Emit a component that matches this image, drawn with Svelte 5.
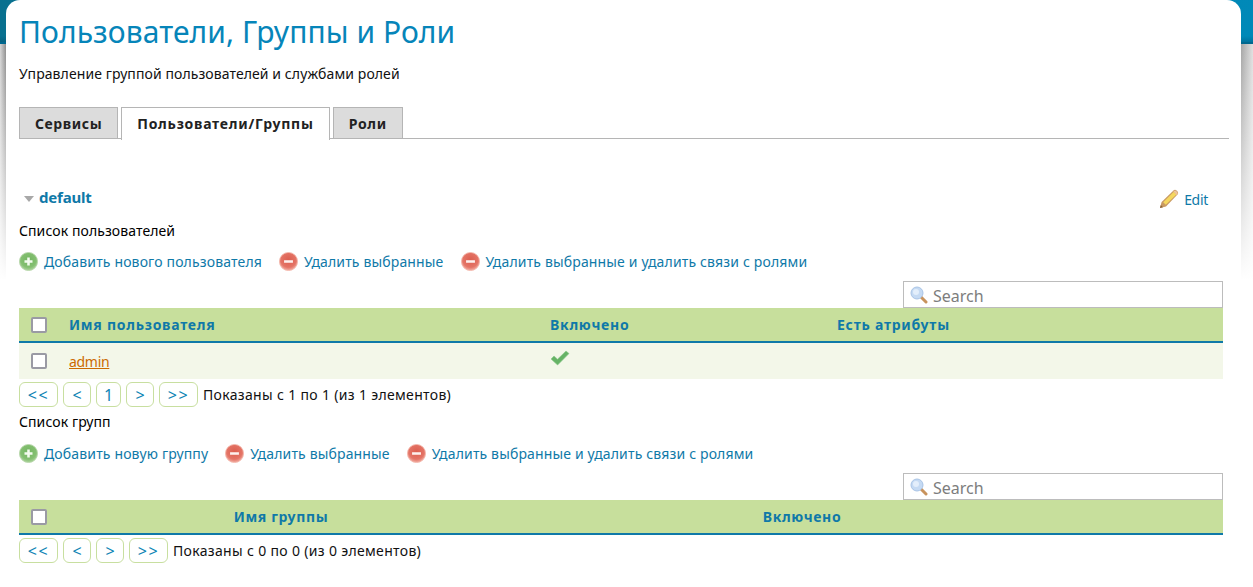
<script>
	const userPager = ['<<', '<', '1', '>', '>>'];
	const groupPager = ['<<', '<', '>', '>>'];
</script>

{#snippet addIcon()}
	<svg class="icon" viewBox="0 0 18 18" aria-hidden="true">
		<circle cx="9" cy="9" r="8.6" fill="url(#add-fill)" stroke="#b5d6a8" stroke-width=".8" />
		<path d="M9 5.2v7.6M5.2 9h7.6" stroke="#f4fbef" stroke-width="2.4" />
	</svg>
{/snippet}

{#snippet removeIcon()}
	<svg class="icon" viewBox="0 0 18 18" aria-hidden="true">
		<circle cx="9" cy="9" r="8.6" fill="url(#remove-fill)" stroke="#f3b5aa" stroke-width=".8" />
		<path d="M4.8 9h8.4" stroke="#fdf1ee" stroke-width="2.4" />
	</svg>
{/snippet}

{#snippet searchBox()}
	<div class="search-row">
		<label class="search">
			<svg viewBox="0 0 18 18" width="18" height="18" aria-hidden="true">
				<path d="M11 11l5 5" stroke="#c8935c" stroke-width="3" stroke-linecap="round" />
				<circle cx="7" cy="7" r="6" fill="#c5daf3" stroke="#a9c4e6" />
				<circle cx="6" cy="6" r="3" fill="#e3eefb" />
			</svg>
			<input type="text" placeholder="Search" />
		</label>
	</div>
{/snippet}

{#snippet pager(items, summary)}
	<div class="pager">
		{#each items as item}
			<button type="button" class:wide={item.length > 1} class:num={item === '1'}>{item}</button>
		{/each}
		<span>{summary}</span>
	</div>
{/snippet}

<svg class="defs" width="0" height="0" aria-hidden="true">
	<defs>
		<radialGradient id="add-fill" cx="50%" cy="40%" r="60%">
			<stop offset="0" stop-color="#74b662" />
			<stop offset=".7" stop-color="#84bf71" />
			<stop offset="1" stop-color="#aed49e" />
		</radialGradient>
		<radialGradient id="remove-fill" cx="50%" cy="40%" r="60%">
			<stop offset="0" stop-color="#dc5f50" />
			<stop offset=".7" stop-color="#e47466" />
			<stop offset="1" stop-color="#f2b0a5" />
		</radialGradient>
	</defs>
</svg>

<div class="page">
	<main class="panel">
		<h1>Пользователи, Группы и Роли</h1>
		<p class="desc">Управление группой пользователей и службами ролей</p>

		<nav class="tabs">
			<a href="#services">Сервисы</a>
			<a href="#users" class="active">Пользователи/Группы</a>
			<a href="#roles">Роли</a>
		</nav>

		<div class="service-head">
			<h2><span class="arrow"></span>default</h2>
			<a href="#edit" class="edit">
				<svg viewBox="0 0 20 20" width="20" height="20" aria-hidden="true">
					<path d="M1 19l1.6-6L14.5 1.5a2.2 2.2 0 0 1 3 0l1 1a2.2 2.2 0 0 1 0 3L7 17.4z" fill="#c99a63" />
					<path d="M4.2 13.2L14.8 2.8l2.6 2.6L6.8 15.8z" fill="#f5d75e" />
					<path d="M14.8 2.2a1.8 1.8 0 0 1 2.6 0l.7.7a1.8 1.8 0 0 1 0 2.6l-.5.4-3.2-3.3z" fill="#f0c49a" />
					<path d="M1 19l.8-3 2.2 2.2z" fill="#8a6238" />
				</svg>
				<span>Edit</span>
			</a>
		</div>

		<h3>Список пользователей</h3>
		<div class="actions">
			<a href="#add-user">{@render addIcon()}Добавить нового пользователя</a>
			<a href="#del-user">{@render removeIcon()}Удалить выбранные</a>
			<a href="#del-user-roles">{@render removeIcon()}Удалить выбранные и удалить связи с ролями</a>
		</div>
		{@render searchBox()}
		<table>
			<colgroup><col style="width: 40px" /><col style="width: 481px" /><col style="width: 287px" /><col /></colgroup>
			<thead>
				<tr>
					<th><input type="checkbox" /></th>
					<th>Имя пользователя</th>
					<th>Включено</th>
					<th>Есть атрибуты</th>
				</tr>
			</thead>
			<tbody>
				<tr>
					<td><input type="checkbox" /></td>
					<td><a href="#admin" class="user">admin</a></td>
					<td>
						<svg class="check" viewBox="0 0 20 16" width="20" height="16" aria-hidden="true">
							<path d="M1 9l3-3 3.5 3.2L16 1l3 2.6L7.6 15z" fill="#66b366" stroke="#8cc98c" stroke-width=".6" />
						</svg>
					</td>
					<td></td>
				</tr>
			</tbody>
		</table>
		{@render pager(userPager, 'Показаны с 1 по 1 (из 1 элементов)')}

		<h3 class="second">Список групп</h3>
		<div class="actions lower">
			<a href="#add-group">{@render addIcon()}Добавить новую группу</a>
			<a href="#del-group">{@render removeIcon()}Удалить выбранные</a>
			<a href="#del-group-roles">{@render removeIcon()}Удалить выбранные и удалить связи с ролями</a>
		</div>
		{@render searchBox()}
		<table class="groups">
			<colgroup><col style="width: 40px" /><col style="width: 444px" /><col style="width: 598px" /><col /></colgroup>
			<thead>
				<tr>
					<th><input type="checkbox" /></th>
					<th>Имя группы</th>
					<th>Включено</th>
					<th></th>
				</tr>
			</thead>
		</table>
		{@render pager(groupPager, 'Показаны с 0 по 0 (из 0 элементов)')}
	</main>
</div>

<style>
	:global(body) {
		margin: 0;
		background: #fff;
		font-family: "Noto Sans", Verdana, sans-serif;
		font-size: 14px;
		letter-spacing: 0.09px;
		color: #111;
	}

	.defs {
		display: block;
	}

	.page {
		height: 587px;
		overflow: hidden;
		padding: 0 12px 0 6px;
		box-sizing: border-box;
		background:
			linear-gradient(rgba(0, 60, 90, 0) 36px, rgba(0, 50, 80, 0.25) 42px) 0 0 / 100% 42px no-repeat,
			linear-gradient(90deg, #08708f, #0089b8) 0 0 / 100% 42px no-repeat,
			linear-gradient(#00688f, #00688f) 0 42px / 100% 2px no-repeat,
			linear-gradient(rgba(255, 255, 255, 0) 44px, #fff 280px),
			linear-gradient(90deg, #d5d5d5 0, #8e8e8e 6px, #a6a6a6 calc(100% - 12px), #e0e0e0 100%);
	}

	.panel {
		height: 100%;
		box-sizing: border-box;
		background: #fff;
		border-radius: 14px 14px 0 0;
		padding: 0 0 0 13px;
	}

	a {
		color: #0f79a8;
		text-decoration: none;
	}

	h1 {
		margin: 0;
		padding-top: 12px;
		font-size: 30px;
		font-weight: 400;
		letter-spacing: 0.08px;
		line-height: 39px;
		color: #0685b9;
	}

	.desc {
		margin: 14px 0 0;
		line-height: 18px;
	}

	.tabs {
		display: flex;
		gap: 3px;
		margin: 24px 12px 0 0;
		height: 31px;
		border-bottom: 1px solid #b5b5b5;
	}

	.tabs a {
		display: block;
		padding: 0 15px;
		line-height: 31px;
		font-weight: 700;
		letter-spacing: 0.7px;
		color: #222;
		background: #dcdcdc;
		border: 1px solid #b5b5b5;
		border-bottom: 0;
	}

	.tabs a:first-child {
		letter-spacing: 0.58px;
	}

	.tabs a.active {
		background: #fff;
		height: 32px;
		margin-bottom: -1px;
		letter-spacing: 0.76px;
	}

	.service-head {
		display: flex;
		justify-content: space-between;
		align-items: center;
		margin: 47px 33px 0 0;
		height: 24px;
	}

	h2 {
		display: flex;
		align-items: center;
		gap: 5px;
		margin: 0 0 2px 5px;
		font-size: 15px;
		font-weight: 700;
		letter-spacing: -0.2px;
		color: #0f79a8;
	}

	.arrow {
		width: 0;
		height: 0;
		margin-top: 3px;
		border: 5px solid transparent;
		border-top: 6px solid #a8a8a8;
		border-bottom: 0;
	}

	.edit {
		display: flex;
		align-items: center;
		gap: 5px;
		margin-top: 2px;
		letter-spacing: -0.3px;
	}

	h3 {
		margin: 12px 0 0;
		font-size: 14px;
		font-weight: 400;
		line-height: 18px;
		color: #000;
	}

	h3.second {
		margin-top: 6px;
	}

	.actions {
		display: flex;
		gap: 17px;
		margin-top: 12px;
		height: 19px;
		align-items: center;
		letter-spacing: 0.15px;
	}

	.actions.lower {
		margin-top: 13px;
	}

	.actions a {
		display: flex;
		align-items: center;
		gap: 6px;
	}

	.icon {
		width: 19px;
		height: 19px;
	}

	.search-row {
		display: flex;
		justify-content: flex-end;
		margin: 10px 18px 0 0;
	}

	.search {
		display: flex;
		align-items: center;
		gap: 5px;
		width: 320px;
		height: 27px;
		box-sizing: border-box;
		border: 1px solid #bcbcbc;
		padding: 0 6px;
		background: #fff;
	}

	.search input {
		flex: 1;
		min-width: 0;
		border: 0;
		padding: 2px 0 0;
		outline: 0;
		font: 16px "Noto Sans", sans-serif;
	}

	.search input::placeholder {
		color: #7d7d7d;
		opacity: 1;
	}

	table {
		width: 1204px;
		table-layout: fixed;
		border-collapse: collapse;
	}

	th {
		height: 33px;
		padding: 0 0 0 10px;
		background: #c7df9c;
		border-bottom: 2px solid #0f79a8;
		color: #0f79a8;
		font-weight: 700;
		letter-spacing: 0.75px;
		text-align: left;
	}

	th:first-child,
	td:first-child {
		padding: 0 0 0 12px;
	}

	.groups th {
		text-align: center;
		padding: 0;
		letter-spacing: 0.65px;
	}

	.groups th:first-child {
		text-align: left;
		padding-left: 12px;
	}

	td {
		height: 36px;
		padding: 0 0 0 10px;
		background: #f3f7e9;
	}

	input[type="checkbox"] {
		appearance: none;
		display: block;
		width: 16px;
		height: 16px;
		margin: 0;
		box-sizing: border-box;
		border: 2px solid #9a9aa4;
		border-radius: 2px;
		background: #fff;
	}

	.user {
		color: #cc6a00;
		text-decoration: underline;
		letter-spacing: -0.3px;
	}

	.check {
		display: block;
		margin-bottom: 7px;
	}

	.pager {
		display: flex;
		align-items: center;
		gap: 5px;
		margin-top: 3px;
		height: 25px;
		letter-spacing: 0.33px;
	}

	.pager button {
		width: 28px;
		height: 25px;
		padding: 0;
		border: 1px solid #c8dfa0;
		border-radius: 6px;
		background: #fff;
		color: #0f85b5;
		font: 16px "Noto Sans", sans-serif;
	}

	.pager button.wide {
		width: 39px;
		letter-spacing: 1.5px;
	}

	.pager button.num {
		width: 25px;
	}
</style>
